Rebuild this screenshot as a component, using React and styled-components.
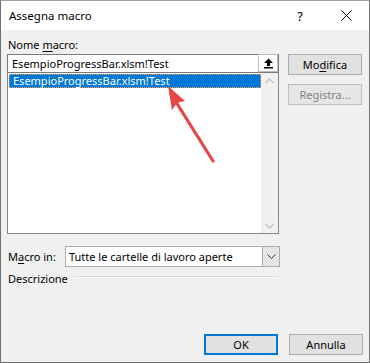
import React from "react";
import styled, { createGlobalStyle } from "styled-components";

const Global = createGlobalStyle`
  html, body { margin: 0; padding: 0; background: #ffffff; }
  body { font-family: "Noto Sans", "Open Sans", sans-serif; font-size: 11px; color: #000; }
`;

const Window = styled.div`
  width: 370px;
  height: 363px;
  box-sizing: border-box;
  border: 1px solid #707070;
  border-top-color: #a0a0a0;
  background: #f0f0f0;
  display: flex;
  flex-direction: column;
`;

const TitleBar = styled.div`
  height: 29px;
  background: #fff;
  display: flex;
  align-items: center;
  padding-left: 8px;
`;

const Title = styled.div`
  flex: 1;
  font-size: 11.5px;
  line-height: 16px;
`;

const TitleBtn = styled.div`
  width: 46px;
  height: 29px;
  display: flex;
  align-items: center;
  justify-content: center;
  font-size: 13px;
`;

const Body = styled.div`
  flex: 1;
  display: flex;
  flex-direction: column;
  padding: 7px 6px 7px 6px;
`;

const Label = styled.div`
  height: 17px;
  line-height: 15px;
  padding-left: 1px;
`;

const U = styled.span`
  text-decoration: underline;
  text-underline-offset: 2px;
`;

const Top = styled.div`
  display: flex;
  gap: 9px;
`;

const LeftCol = styled.div`
  width: 272px;
  display: flex;
  flex-direction: column;
  position: relative;
`;

const Input = styled.div`
  height: 19px;
  box-sizing: border-box;
  border: 1px solid #7a7a7a;
  background: #fff;
  display: flex;
  align-items: center;
  padding-left: 4px;
`;

const InputText = styled.div`
  flex: 1;
  line-height: 16px;
`;

const UpBtn = styled.div`
  width: 20px;
  height: 18px;
  box-sizing: border-box;
  border: 1px solid #bcbcbc;
  background: #fff;
  display: flex;
  align-items: center;
  justify-content: center;
  margin-top: -1px;
`;

const List = styled.div`
  height: 161px;
  box-sizing: border-box;
  border: 1px solid #828790;
  border-top: none;
  background: #fff;
  display: flex;
`;

const ListItems = styled.div`
  flex: 1;
  padding: 1px 0 0 1px;
`;

const Item = styled.div`
  height: 14px;
  box-sizing: border-box;
  background: ${(p) => (p.$selected ? "#0078d7" : "transparent")};
  color: ${(p) => (p.$selected ? "#fff" : "#000")};
  border: 1px dotted ${(p) => (p.$selected ? "#f0a050" : "transparent")};
  line-height: 11px;
  padding-left: 3px;
  white-space: nowrap;
`;

const Scroll = styled.div`
  width: 17px;
  background: #f0f0f0;
  display: flex;
  flex-direction: column;
  justify-content: space-between;
  align-items: center;
  padding: 5px 0 4px;
`;

const RightCol = styled.div`
  display: flex;
  flex-direction: column;
  gap: 9px;
`;

const Button = styled.div`
  width: 74px;
  height: 21px;
  box-sizing: border-box;
  border: ${(p) => (p.$default ? "2px" : "1px")} solid;
  border-color: ${(p) => (p.$default ? "#0078d7" : p.$disabled ? "#bfbfbf" : "#adadad")};
  background: ${(p) => (p.$disabled ? "#e6e6e6" : "#e1e1e1")};
  color: ${(p) => (p.$disabled ? "#838383" : "#000")};
  display: flex;
  align-items: center;
  justify-content: center;
  line-height: 16px;
`;

const MacroRow = styled.div`
  display: flex;
  align-items: center;
  margin-top: 12px;
  height: 21px;
`;

const MacroLabel = styled.div`
  width: 57px;
  padding-left: 1px;
`;

const Select = styled.div`
  width: 215px;
  height: 21px;
  box-sizing: border-box;
  border: 1px solid #adadad;
  background: #fff;
  display: flex;
  align-items: stretch;
`;

const SelectText = styled.div`
  flex: 1;
  display: flex;
  align-items: center;
  padding-left: 3px;
`;

const SelectBtn = styled.div`
  width: 16px;
  background: #e5e5e5;
  border-left: 1px solid #adadad;
  display: flex;
  align-items: center;
  justify-content: center;
`;

const DescRow = styled.div`
  width: 272px;
  display: flex;
  align-items: center;
  gap: 5px;
  margin-top: 2px;
  height: 18px;
`;

const DescLabel = styled.div`
  padding-left: 1px;
`;

const Rule = styled.div`
  flex: 1;
  height: 1px;
  background: #dcdcdc;
  border-bottom: 1px solid #fff;
  margin-top: -2px;
`;

const Footer = styled.div`
  margin-top: auto;
  display: flex;
  justify-content: flex-end;
  gap: 11px;
`;

const Arrow = styled.svg`
  position: absolute;
  left: 0;
  top: 0;
  pointer-events: none;
`;

export default function App() {
  return (
    <>
      <Global />
      <Window>
        <TitleBar>
          <Title>Assegna macro</Title>
          <TitleBtn>?</TitleBtn>
          <TitleBtn>
            <svg width="11" height="11" viewBox="0 0 11 11">
              <path d="M0.5 0.5 L10.5 10.5 M10.5 0.5 L0.5 10.5" stroke="#000" strokeWidth="1" />
            </svg>
          </TitleBtn>
        </TitleBar>
        <Body>
          <Label>
            Nome <U>m</U>acro:
          </Label>
          <Top>
            <LeftCol>
              <Input>
                <InputText>EsempioProgressBar.xlsm!Test</InputText>
                <UpBtn>
                  <svg width="11" height="11" viewBox="0 0 11 11">
                    <path d="M5.5 0.5 L10 5 L7 5 L7 8 L4 8 L4 5 L1 5 Z" fill="#000" />
                    <rect x="1" y="9" width="9" height="1.5" fill="#000" />
                  </svg>
                </UpBtn>
              </Input>
              <List>
                <ListItems>
                  <Item $selected>EsempioProgressBar.xlsm!Test</Item>
                </ListItems>
                <Scroll>
                  <svg width="9" height="6" viewBox="0 0 9 6">
                    <path d="M0.5 5 L4.5 1 L8.5 5" fill="none" stroke="#c5c5c5" strokeWidth="1.5" />
                  </svg>
                  <svg width="9" height="6" viewBox="0 0 9 6">
                    <path d="M0.5 1 L4.5 5 L8.5 1" fill="none" stroke="#c5c5c5" strokeWidth="1.5" />
                  </svg>
                </Scroll>
              </List>
              <Arrow width="272" height="180" viewBox="0 0 272 180">
                <line x1="206" y1="107" x2="169" y2="48" stroke="#e84545" strokeWidth="3.2" strokeLinecap="round" />
                <path d="M161 32 L178 47 L170 49 L165 56 Z" fill="#e84545" />
              </Arrow>
            </LeftCol>
            <RightCol>
              <Button>
                Mo<U>d</U>ifica
              </Button>
              <Button $disabled>Registra...</Button>
            </RightCol>
          </Top>
          <MacroRow>
            <MacroLabel>
              M<U>a</U>cro in:
            </MacroLabel>
            <Select>
              <SelectText>Tutte le cartelle di lavoro aperte</SelectText>
              <SelectBtn>
                <svg width="9" height="5" viewBox="0 0 9 5">
                  <path d="M0.5 0.5 L4.5 4.5 L8.5 0.5" fill="none" stroke="#333" strokeWidth="1" />
                </svg>
              </SelectBtn>
            </Select>
          </MacroRow>
          <DescRow>
            <DescLabel>Descrizione</DescLabel>
            <Rule />
          </DescRow>
          <Footer>
            <Button $default>OK</Button>
            <Button>Annulla</Button>
          </Footer>
        </Body>
      </Window>
    </>
  );
}
